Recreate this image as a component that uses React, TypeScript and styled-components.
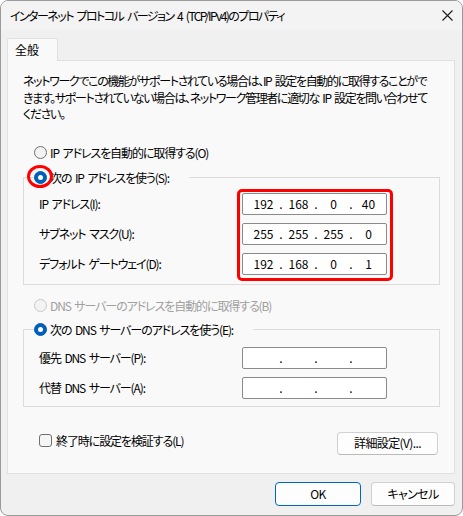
import React from 'react';
import styled, { createGlobalStyle } from 'styled-components';

const GlobalStyle = createGlobalStyle`
  html, body {
    margin: 0;
    padding: 0;
    background: #ffffff;
  }
  * { box-sizing: border-box; }
`;

const FONT = `"Noto Sans CJK JP", "Noto Sans", sans-serif`;

interface IpFieldProps {
  value?: [string, string, string, string];
}

const IpField: React.FC<IpFieldProps> = ({ value }) => (
  <IpBox>
    {[0, 1, 2, 3].map((i) => (
      <React.Fragment key={i}>
        {i > 0 && <IpDot>.</IpDot>}
        <IpCell>{value ? value[i] : ''}</IpCell>
      </React.Fragment>
    ))}
  </IpBox>
);

const Radio: React.FC<{ checked?: boolean; disabled?: boolean; marked?: boolean }> = ({
  checked,
  disabled,
  marked,
}) => (
  <RadioWrap>
    <RadioCircle $checked={checked} $disabled={disabled} />
    {marked && <RedRing />}
  </RadioWrap>
);

export default function App() {
  return (
    <>
      <GlobalStyle />
      <Window>
        <TitleBar>
          <TitleText>インターネット プロトコル バージョン 4 (TCP/IPv4)のプロパティ</TitleText>
          <CloseButton aria-label="閉じる">
            <svg width="11" height="11" viewBox="0 0 11 11">
              <path d="M0.5 0.5 L10.5 10.5 M10.5 0.5 L0.5 10.5" stroke="#1a1a1a" strokeWidth="1.1" />
            </svg>
          </CloseButton>
        </TitleBar>

        <Body>
          <TabStrip>
            <Tab>全般</Tab>
          </TabStrip>
          <Panel>
            <Description>
              ネットワークでこの機能がサポートされている場合は、IP 設定を自動的に取得することがで
              <br />
              きます。サポートされていない場合は、ネットワーク管理者に適切な IP 設定を問い合わせて
              <br />
              ください。
            </Description>

            <OptionRow $top={21}>
              <Radio />
              <OptionLabel>IP アドレスを自動的に取得する(O)</OptionLabel>
            </OptionRow>

            <Group $top={8} $padTop={7} $padBottom={9}>
              <Legend>
                <Radio checked marked />
                <OptionLabel>次の IP アドレスを使う(S):</OptionLabel>
              </Legend>
              <GroupGrid>
                <LabelColumn>
                  <FieldLabel>IP アドレス(I):</FieldLabel>
                  <FieldLabel>サブネット マスク(U):</FieldLabel>
                  <FieldLabel>デフォルト ゲートウェイ(D):</FieldLabel>
                </LabelColumn>
                <InputColumn>
                  <IpField value={['192', '168', '0', '40']} />
                  <IpField value={['255', '255', '255', '0']} />
                  <IpField value={['192', '168', '0', '1']} />
                  <RedBox />
                </InputColumn>
              </GroupGrid>
            </Group>

            <OptionRow $top={12}>
              <Radio disabled />
              <OptionLabel $disabled>DNS サーバーのアドレスを自動的に取得する(B)</OptionLabel>
            </OptionRow>

            <Group $top={7} $padTop={9} $padBottom={7}>
              <Legend>
                <Radio checked />
                <OptionLabel>次の DNS サーバーのアドレスを使う(E):</OptionLabel>
              </Legend>
              <GroupGrid>
                <LabelColumn>
                  <FieldLabel>優先 DNS サーバー(P):</FieldLabel>
                  <FieldLabel>代替 DNS サーバー(A):</FieldLabel>
                </LabelColumn>
                <InputColumn>
                  <IpField />
                  <IpField />
                </InputColumn>
              </GroupGrid>
            </Group>

            <FooterRow>
              <CheckRow>
                <CheckBox />
                <OptionLabel>終了時に設定を検証する(L)</OptionLabel>
              </CheckRow>
              <PushButton $width={101} $height={23}>詳細設定(V)...</PushButton>
            </FooterRow>
          </Panel>

          <DialogButtons>
            <PushButton $width={86} $height={24} $default>OK</PushButton>
            <PushButton $width={84} $height={24}>キャンセル</PushButton>
          </DialogButtons>
        </Body>
      </Window>
    </>
  );
}

// --- Styled Components ---

const Window = styled.div`
  width: 463px;
  height: 516px;
  background: #f0f0f0;
  border: 1px solid #9a9a9a;
  border-radius: 8px;
  overflow: hidden;
  display: flex;
  flex-direction: column;
  font-family: ${FONT};
  font-size: 12px;
  font-feature-settings: 'palt';
  letter-spacing: -1.1px;
  word-spacing: 2px;
  color: #000;
`;

const TitleBar = styled.div`
  height: 29px;
  flex-shrink: 0;
  display: flex;
  align-items: center;
  justify-content: space-between;
  padding: 0 9px 0 9px;
  background: #f3f3f3;
`;

const TitleText = styled.div`
  font-size: 12px;
  line-height: 16px;
  letter-spacing: -1.55px;
  word-spacing: 2.5px;
  white-space: nowrap;
`;

const CloseButton = styled.div`
  width: 11px;
  height: 11px;
  display: flex;
  margin-top: -1px;
`;

const Body = styled.div`
  flex: 1;
  display: flex;
  flex-direction: column;
  padding: 8px 7px 0 6px;
`;

const TabStrip = styled.div`
  display: flex;
  position: relative;
  z-index: 1;
  margin-bottom: -1px;
`;

const Tab = styled.div`
  width: 51px;
  height: 23px;
  padding: 3px 0 0 7px;
  line-height: 16px;
  letter-spacing: 0;
  background: #f9f9f9;
  border: 1px solid #e0e0e0;
  border-bottom: none;
  border-radius: 2px 2px 0 0;
`;

const Panel = styled.div`
  height: 414px;
  background: #f9f9f9;
  border: 1px solid #e0e0e0;
  padding: 12px 13px 0 15px;
  display: flex;
  flex-direction: column;
`;

const Description = styled.p`
  margin: 0;
  line-height: 16.5px;
  letter-spacing: -1.35px;
  white-space: nowrap;
`;

const OptionRow = styled.div<{ $top: number }>`
  display: flex;
  align-items: center;
  height: 17px;
  margin-top: ${(p) => p.$top}px;
  padding-left: 11px;
`;

const OptionLabel = styled.span<{ $disabled?: boolean }>`
  line-height: 17px;
  white-space: nowrap;
  margin-left: 4px;
  color: ${(p) => (p.$disabled ? '#a0a0a0' : '#000')};
`;

const RadioWrap = styled.span`
  position: relative;
  width: 12px;
  height: 12px;
  flex-shrink: 0;
  display: inline-flex;
`;

const RadioCircle = styled.span<{ $checked?: boolean; $disabled?: boolean }>`
  width: 13px;
  height: 13px;
  margin: -0.5px;
  border-radius: 50%;
  background: ${(p) => (p.$checked ? '#005fb8' : '#f3f3f3')};
  border: 1px solid
    ${(p) => (p.$checked ? '#005fb8' : p.$disabled ? '#c9c9c9' : '#6f6f6f')};
  position: relative;

  &::after {
    content: '';
    display: ${(p) => (p.$checked ? 'block' : 'none')};
    position: absolute;
    left: 3px;
    top: 3px;
    width: 5px;
    height: 5px;
    border-radius: 50%;
    background: #ffffff;
  }
`;

const RedRing = styled.span`
  position: absolute;
  left: -7px;
  top: -6px;
  width: 26px;
  height: 23px;
  border: 3px solid #ff0000;
  border-radius: 50%;
  pointer-events: none;
`;

const Group = styled.fieldset<{ $top: number; $padTop: number; $padBottom: number }>`
  margin: ${(p) => p.$top}px 0 0 0;
  width: 417px;
  border: 1px solid #dcdcdc;
  padding: ${(p) => p.$padTop}px 0 ${(p) => p.$padBottom}px 0;
  min-width: 0;
`;

const Legend = styled.legend`
  display: flex;
  align-items: center;
  height: 17px;
  padding: 0 20px 0 0;
  margin-left: 10px;
`;

const GroupGrid = styled.div`
  display: flex;
  padding-left: 15px;
`;

const LabelColumn = styled.div`
  width: 203px;
  display: flex;
  flex-direction: column;
  gap: 8px;
`;

const FieldLabel = styled.div`
  height: 22px;
  display: flex;
  align-items: center;
  white-space: nowrap;
`;

const InputColumn = styled.div`
  position: relative;
  width: 145px;
  display: flex;
  flex-direction: column;
  gap: 8px;
`;

const RedBox = styled.div`
  position: absolute;
  left: -5px;
  right: -6px;
  top: -4px;
  bottom: -6px;
  border: 3px solid #ff0000;
  border-radius: 5px;
  pointer-events: none;
`;

const IpBox = styled.div`
  height: 22px;
  background: #ffffff;
  border: 1px solid #8a8a8a;
  border-radius: 2px;
  display: flex;
  align-items: center;
  padding-left: 7px;
  letter-spacing: 0;
  word-spacing: 0;
`;

const IpCell = styled.span`
  width: 27px;
  text-align: center;
  line-height: 16px;
`;

const IpDot = styled.span`
  width: 8px;
  text-align: center;
  line-height: 16px;
`;

const FooterRow = styled.div`
  display: flex;
  justify-content: space-between;
  align-items: flex-start;
  margin-top: 25px;
  padding: 0 2px 0 16px;
  width: 417px;
`;

const CheckRow = styled.div`
  display: flex;
  align-items: center;
  height: 17px;
  margin-top: 0px;
`;

const CheckBox = styled.span`
  width: 13px;
  height: 13px;
  border: 1px solid #6f6f6f;
  border-radius: 3px;
  background: #f5f5f5;
  flex-shrink: 0;
`;

const PushButton = styled.div<{ $width: number; $height: number; $default?: boolean }>`
  width: ${(p) => p.$width}px;
  height: ${(p) => p.$height}px;
  display: flex;
  align-items: center;
  justify-content: center;
  background: #fdfdfd;
  border: 1px solid ${(p) => (p.$default ? '#0067c0' : '#d0d0d0')};
  border-bottom-color: ${(p) => (p.$default ? '#0067c0' : '#bababa')};
  border-radius: 4px;
  white-space: nowrap;
  line-height: 16px;
  letter-spacing: -0.6px;
`;

const DialogButtons = styled.div`
  display: flex;
  justify-content: flex-end;
  gap: 10px;
  margin-top: 8px;
`;
